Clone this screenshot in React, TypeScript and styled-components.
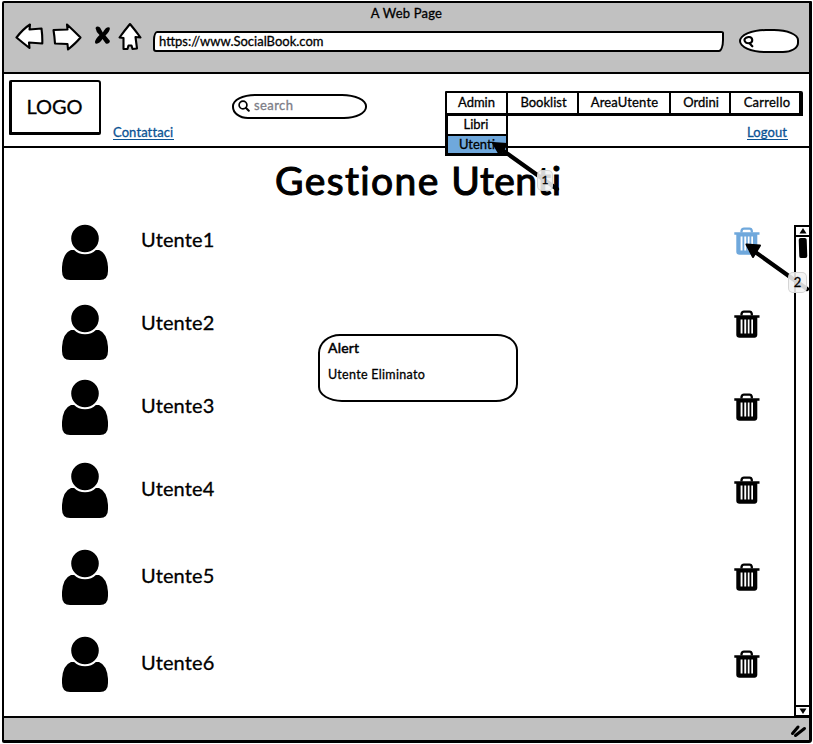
import React from "react";
import styled, { createGlobalStyle } from "styled-components";

const GlobalStyle = createGlobalStyle`
  * { box-sizing: border-box; }
  body { margin: 0; background: #fff; color: #000; font-family: Lato, "Noto Sans", sans-serif; }
`;

const Page = styled.div`
  position: relative;
  width: 813px;
  height: 744px;
  padding: 1px 0 1px 2px;
  overflow: hidden;
`;

const Frame = styled.div`
  display: flex;
  flex-direction: column;
  width: 810px;
  height: 742px;
  border: 2.5px solid #000;
  border-width: 2px 3px 3px 2px;
  border-radius: 2px 1px 3px 2px;
`;

const Chrome = styled.header`
  height: 71px;
  flex: none;
  background: #c1c1c1;
  border-bottom: 2px solid #000;
`;

const Text = styled.span<{ $size?: number; $spacing?: number; $stroke?: number }>`
  font-size: ${(p) => p.$size ?? 13}px;
  letter-spacing: ${(p) => p.$spacing ?? 0}px;
  line-height: 1.2;
  white-space: nowrap;
  -webkit-text-stroke: ${(p) => p.$stroke ?? 0.3}px currentColor;
`;

const WindowTitle = styled.div`
  display: flex;
  justify-content: center;
  height: 20px;
  padding-top: 3px;
`;

const Toolbar = styled.div`
  display: flex;
  align-items: flex-start;
  height: 32px;
  padding-left: 11px;
`;

const AddressBar = styled.div`
  display: flex;
  align-items: center;
  width: 571px;
  height: 21px;
  margin: 8px 0 0 11px;
  padding-left: 4px;
  background: #fff;
  border: 2px solid #000;
  border-bottom-width: 2.5px;
  border-radius: 4px 3px 5px 3px / 9px 2px 12px 3px;
`;

const QuickSearch = styled.div`
  display: flex;
  align-items: center;
  width: 60px;
  height: 24px;
  margin: 6px 0 0 15px;
  padding-left: 2px;
  background: #fff;
  border: 2px solid #000;
  border-radius: 27px 25px 16px 26px / 12px 11px 10px 12px;
`;

const SiteHeader = styled.div`
  display: flex;
  align-items: flex-start;
  flex: none;
  height: 74px;
  padding-left: 5px;
  border-bottom: 2px solid #000;
`;

const Logo = styled.div`
  display: flex;
  align-items: center;
  justify-content: center;
  width: 92px;
  height: 55px;
  margin-top: 6px;
  padding: 0 2px 2px 0;
  border: 2px solid #000;
  border-width: 2px 2px 3px 3px;
  border-radius: 2px 3px 2px 1px;
`;

const Link = styled.a`
  color: #0b5394;
  font-size: 13px;
  line-height: 14px;
  height: 15px;
  border-bottom: 1px solid #0b5394;
  letter-spacing: 0.1px;
  -webkit-text-stroke: 0.3px currentColor;
`;

const ContactLink = styled(Link)`
  width: 61px;
  margin: 51px 0 0 12px;
`;

const LogoutLink = styled(Link)`
  width: 41px;
  margin: 9px 15px 0 0;
`;

const SearchField = styled.div`
  display: flex;
  align-items: center;
  gap: 4px;
  width: 135px;
  height: 25px;
  margin: 20px 0 0 58px;
  padding: 0 0 1px 4px;
  color: #7d7d87;
  border: 2px solid #000;
  border-radius: 23px 25px 23px 16px / 12px;
`;

const Navigation = styled.div`
  display: flex;
  flex-direction: column;
  align-items: flex-end;
  width: 358px;
  margin: 17px 0 0 78px;
`;

const Menu = styled.nav`
  position: relative;
  display: flex;
  width: 358px;
  height: 25px;
  border: 2px solid #000;
  border-right-width: 4px;
  border-bottom-width: 3px;
  border-radius: 1px 2px 0 1px;
`;

const MenuItem = styled.div<{ $width: number; $shift?: number }>`
  display: flex;
  align-items: center;
  justify-content: center;
  width: ${(p) => p.$width}px;
  padding-left: ${(p) => p.$shift ?? 0}px;
  flex: none;
  border-right: 2px solid #000;
  &:nth-child(5) { border-right: 0; }
`;

const Dropdown = styled.div`
  position: absolute;
  top: 20px;
  left: -2px;
  width: 63px;
  border: 2px solid #000;
  border-top-width: 3px;
  border-left-width: 3px;
  border-bottom-width: 3px;
  background: #fff;
`;

const DropdownItem = styled.div<{ $active?: boolean }>`
  display: flex;
  align-items: center;
  justify-content: center;
  height: ${(p) => (p.$active ? 19 : 18)}px;
  padding-right: ${(p) => (p.$active ? 0 : 2)}px;
  background: ${(p) => (p.$active ? "#6fa8dc" : "#fff")};
  border-top: ${(p) => (p.$active ? "2px solid #000" : "0")};
`;

const Main = styled.main`
  position: relative;
  flex: 1;
  min-height: 0;
  display: grid;
  grid-template-rows: 77px 1fr;
`;

const Title = styled.h1`
  margin: 8px 0 0 271px;
  font-size: 39px;
  line-height: 48px;
  font-weight: 400;
  letter-spacing: 1.4px;
  white-space: nowrap;
  -webkit-text-stroke: 1.1px #000;
  stroke-linejoin: round;
`;

const TitleEnd = styled.span`
  letter-spacing: 0.5px;
`;

const Body = styled.div`
  display: flex;
  justify-content: space-between;
`;

const UserList = styled.div`
  flex: 1;
`;

const UserRow = styled.div<{ $height: number }>`
  display: grid;
  grid-template-columns: 137px 593px 29px;
  align-items: start;
  height: ${(p) => p.$height}px;
`;

const AvatarSlot = styled.div<{ $top: number }>`
  height: 57px;
  padding-left: 57px;
  margin-top: ${(p) => p.$top}px;
`;

const NameSlot = styled.div`
  padding-top: 2px;
`;

const TrashSlot = styled.div`
  padding-top: 2px;
`;

const Scrollbar = styled.div`
  display: flex;
  flex-direction: column;
  align-items: center;
  width: 15px;
  height: 492px;
  margin-top: 0;
  border: 2px solid #000;
  border-right: 0;
`;

const ScrollButton = styled.div<{ $bottom?: boolean }>`
  display: flex;
  align-items: center;
  justify-content: center;
  width: 13px;
  height: 10px;
  border: 0 solid #000;
  border-width: ${(p) => (p.$bottom ? "2px 0 0" : "0 0 2px")};
  margin-top: ${(p) => (p.$bottom ? "auto" : "0")};
`;

const Thumb = styled.div`
  width: 8px;
  height: 20px;
  margin: 1px 0 0 1px;
  background: #000;
  border-radius: 2px;
  transform: rotate(-2deg);
`;

const Alert = styled.section`
  position: absolute;
  left: 314px;
  top: 186px;
  display: flex;
  flex-direction: column;
  gap: 10px;
  width: 200px;
  height: 68px;
  padding: 4px 8px;
  background: #fff;
  border: 2px solid #000;
  border-radius: 22px 21px 22px 24px / 19px 16px 18px 15px;
`;

const StatusBar = styled.footer`
  display: flex;
  align-items: center;
  justify-content: flex-end;
  flex: none;
  height: 24px;
  padding: 4px 2px 0 0;
  background: #c1c1c1;
  border-top: 2px solid #000;
`;

const Icon = styled.svg<{ $left?: number; $top?: number }>`
  display: block;
  flex: none;
  margin: ${(p) => p.$top ?? 0}px 0 0 ${(p) => p.$left ?? 0}px;
`;

const Pointer = styled.svg<{ $x: number; $y: number }>`
  position: absolute;
  left: ${(p) => p.$x}px;
  top: ${(p) => p.$y}px;
`;

const Step = styled.div<{ $x: number; $y: number; $w: number }>`
  position: absolute;
  left: ${(p) => p.$x}px;
  top: ${(p) => p.$y}px;
  display: flex;
  align-items: center;
  justify-content: center;
  width: ${(p) => p.$w}px;
  height: 21px;
  background: rgba(242, 242, 242, 0.88);
  border: 1px solid rgba(205, 205, 205, 0.8);
  border-radius: 5px;
`;

const ink = { stroke: "#000", strokeLinejoin: "round", strokeLinecap: "round" } as const;

const BackIcon = () => (
  <Icon width="29" height="26" viewBox="0 0 29 26">
    <path {...ink} fill="#fff" strokeWidth="2.1" d="M1.5 14.5 Q8 6 15 1.5 L14.5 6.5 L26.5 5.5 Q27.5 13 27.3 20.5 L14 19.5 L14.5 25 Q8 20 1.5 14.5Z" />
  </Icon>
);

const ForwardIcon = () => (
  <Icon width="30" height="28" viewBox="0 0 30 28" $left={8}>
    <path {...ink} fill="#fff" strokeWidth="2.1" d="M1.5 7 L15.5 6.5 L15 1.5 Q21 7 28.5 14.5 Q24 20 16 26.5 L15.5 21 L3 20.5 Q2.5 13 1.5 7Z" />
  </Icon>
);

const StopIcon = () => (
  <Icon width="17" height="20" viewBox="0 0 17 20" $left={12} $top={2}>
    <path d="M1.5 3 Q3 .5 6 2.5 L8.8 7.5 Q12 1.5 15.5 2.5 Q17 5 11.5 10.5 L16 16 Q15.5 19.5 11.8 18.5 L8.5 14 Q5 19.5 1.5 18.5 Q-.5 16 5.5 10 Q2 7 1.5 3Z" />
  </Icon>
);

const HomeIcon = () => (
  <Icon width="24" height="29" viewBox="0 0 24 29" $left={7} $top={-1}>
    <path {...ink} fill="#fff" strokeWidth="2.1" d="M12 2 Q17 8 22.5 15.5 L17.5 15 L19 26.5 L14.5 27 L13.5 23.5 L10.5 23.5 L9.5 27 L5.5 27 L5.5 16 L1.5 15.5 Q7 8 12 2Z" />
  </Icon>
);

const Magnifier = () => (
  <Icon width="12" height="12" viewBox="0 0 12 12">
    <circle cx="5" cy="5" r="3.9" fill="none" stroke="#000" strokeWidth="1.7" />
    <path {...ink} strokeWidth="2" d="M8 8 L10.8 10.8" />
  </Icon>
);

const SmallMagnifier = () => (
  <Icon width="11" height="13" viewBox="0 0 11 13">
    <path {...ink} fill="none" strokeWidth="2.1" d="M5.5 2 C10 1.5 10.5 7.5 6.5 8.2 C2 9 0 4.5 3 2.8 L5.5 2 M6.2 8 L9.3 11.3" />
  </Icon>
);

const Avatar = () => (
  <svg width="48" height="57" viewBox="0 0 48 57" display="block">
    <path d="M10 26 H38 Q46 29 47 43 V47 Q47 56 39 56 H9 Q1 56 1 47 V43 Q2 29 10 26Z" />
    <circle cx="24" cy="14.5" r="14.8" stroke="#fff" strokeWidth="2" />
  </svg>
);

const Trash = ({ color = "#000" }: { color?: string }) => (
  <svg width="26" height="28" viewBox="0 0 26 28" display="block">
    <path fill="none" stroke={color} strokeWidth="2.3" strokeLinejoin="round" d="M7.5 5.5 V4 Q8 1.6 10 1.6 H15.5 Q17.5 1.6 17.8 4 V5.5" />
    <path fill={color} d="M.3 5.2 H25.5 V7.8 H23.3 V25 Q23 27.8 20.5 27.8 H5.5 Q2.5 27.8 2.3 25 V7.8 H.3Z" />
    <path fill="#fff" d="M6.6 9.6 H8.5 V23.4 H6.6Z M10.3 9.6 H12.2 V23.4 H10.3Z M13.8 9.6 H15.5 V23.4 H13.8Z M17.3 9.6 H19 V23.4 H17.3Z" />
  </svg>
);

const users = [
  { name: "Utente1", height: 83, avatarTop: -1 },
  { name: "Utente2", height: 83, avatarTop: -4 },
  { name: "Utente3", height: 83, avatarTop: -12 },
  { name: "Utente4", height: 87, avatarTop: -12 },
  { name: "Utente5", height: 87, avatarTop: -12 },
  { name: "Utente6", height: 60, avatarTop: -12 },
];

export default function App() {
  return (
    <>
      <GlobalStyle />
      <Page>
        <Frame>
          <Chrome>
            <WindowTitle><Text $spacing={0.2}>A Web Page</Text></WindowTitle>
            <Toolbar>
              <BackIcon />
              <ForwardIcon />
              <StopIcon />
              <HomeIcon />
              <AddressBar><Text $spacing={0}>https://www.SocialBook.com</Text></AddressBar>
              <QuickSearch><SmallMagnifier /></QuickSearch>
            </Toolbar>
          </Chrome>

          <SiteHeader>
            <Logo><Text $size={20} $spacing={0}>LOGO</Text></Logo>
            <ContactLink>Contattaci</ContactLink>
            <SearchField>
              <Magnifier />
              <Text $spacing={0.4}>search</Text>
            </SearchField>
            <Navigation>
              <Menu>
                <MenuItem $width={61}><Text>Admin</Text></MenuItem>
                <MenuItem $width={71} $shift={2}><Text>Booklist</Text></MenuItem>
                <MenuItem $width={92} $shift={1}><Text $spacing={0.15}>AreaUtente</Text></MenuItem>
                <MenuItem $width={60} $shift={2}><Text>Ordini</Text></MenuItem>
                <MenuItem $width={68} $shift={4}><Text $spacing={0.25}>Carrello</Text></MenuItem>
                <Dropdown>
                  <DropdownItem><Text>Libri</Text></DropdownItem>
                  <DropdownItem $active><Text>Utenti</Text></DropdownItem>
                </Dropdown>
              </Menu>
              <LogoutLink>Logout</LogoutLink>
            </Navigation>
          </SiteHeader>

          <Main>
            <Title>Gestione <TitleEnd>Utenti</TitleEnd></Title>
            <Body>
              <UserList>
                {users.map((user, i) => (
                  <UserRow key={user.name} $height={user.height}>
                    <AvatarSlot $top={user.avatarTop}><Avatar /></AvatarSlot>
                    <NameSlot><Text $size={20} $spacing={0.15}>{user.name}</Text></NameSlot>
                    <TrashSlot><Trash color={i === 0 ? "#6fa8dc" : "#000"} /></TrashSlot>
                  </UserRow>
                ))}
              </UserList>
              <Scrollbar>
                <ScrollButton>
                  <svg width="8" height="6" viewBox="0 0 8 6"><path d="M4 0 L7.5 5.5 H.5Z" /></svg>
                </ScrollButton>
                <Thumb />
                <ScrollButton $bottom>
                  <svg width="8" height="6" viewBox="0 0 8 6"><path d="M.5 .5 H7.5 L4 6Z" /></svg>
                </ScrollButton>
              </Scrollbar>
            </Body>
            <Alert>
              <Text $size={14} $spacing={0.2} $stroke={0.5}>Alert</Text>
              <Text $size={12.5} $spacing={0.3}>Utente Eliminato</Text>
            </Alert>
          </Main>

          <StatusBar>
            <svg width="17" height="14" viewBox="0 0 17 14">
              <path {...ink} strokeWidth="3" d="M2.5 9.5 L8 3 M5.5 11.5 L14.5 4.5" />
            </svg>
          </StatusBar>
        </Frame>

        <Pointer $x={490} $y={140} width="72" height="56" viewBox="0 0 72 56">
          <path {...ink} strokeWidth="4.2" d="M8 7 L67 49" />
          <path d="M3 3 L17 4 L10 15Z" {...ink} strokeWidth="2" />
        </Pointer>
        <Step $x={537} $y={170} $w={16}><Text $size={12}>1</Text></Step>
        <Pointer $x={743} $y={241} width="67" height="54" viewBox="0 0 67 54">
          <path {...ink} strokeWidth="4.2" d="M8 8 L64 48" />
          <path d="M3.5 3.5 L17 4.5 L10 16Z" {...ink} strokeWidth="2" />
        </Pointer>
        <Step $x={788} $y={272} $w={19}><Text $size={13}>2</Text></Step>
      </Page>
    </>
  );
}
